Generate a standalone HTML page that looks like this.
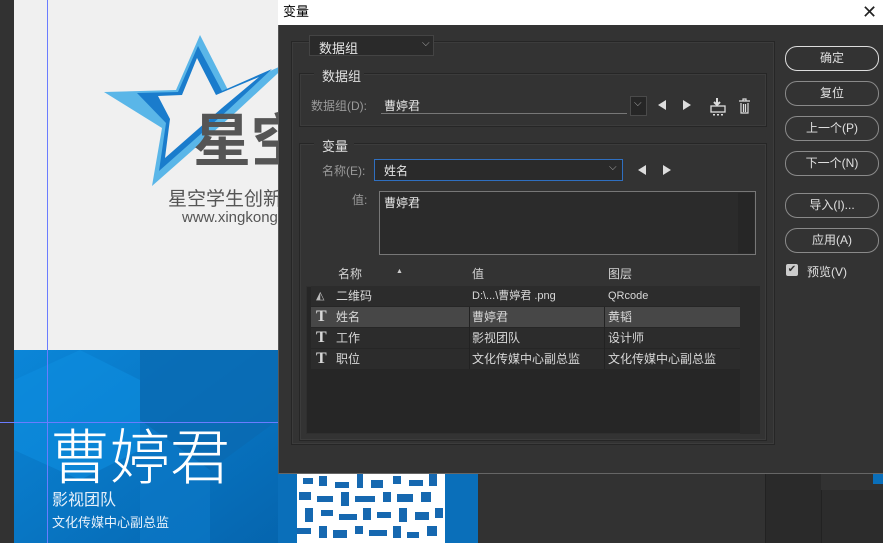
<!DOCTYPE html>
<html><head><meta charset="utf-8"><style>
*{margin:0;padding:0;box-sizing:border-box}
body{width:883px;height:543px;overflow:hidden;background:#323232;position:relative;font-family:"Liberation Sans","Noto Sans CJK SC",sans-serif;}
.a{position:absolute}
.t{color:#d4d4d4;font-size:12px;white-space:nowrap}
.btn{position:absolute;left:785px;width:94px;height:25px;border:1px solid #8a8a8a;border-radius:12px;color:#e0e0e0;font-size:12px;text-align:center;line-height:23px}
.box{position:absolute;border:1px solid #262626;box-shadow:inset 0 0 0 1px #3c3c3c}
.row{position:absolute;left:311px;width:429px;height:20px;font-size:12px;color:#d8d8d8;line-height:20px}
.row span{position:absolute}
</style></head><body>
<div class="a" style="left:14px;top:0;width:264px;height:350px;background:#f0f0f0"></div>
<svg class="a" style="left:0;top:0" width="278" height="543">
<polygon points="200,35 228,90 290,62 236,112 152,186 162,128 104,92 176,90" fill="#5ab6e8"/>
<polygon points="198,46 222,91 272,69 228,110 159,171 166,123 137,93 178,92" fill="#1a7ccc"/>
<polygon points="197,58 216,95 259,77 222,108 165,158 170,119 158,96 182,95" fill="#f0f0f0"/>
<defs><linearGradient id="g" x1="0" y1="0" x2="1" y2="1"><stop offset="0" stop-color="#0b86d8"/><stop offset="1" stop-color="#0565ae"/></linearGradient></defs>
<rect x="14" y="350" width="264" height="193" fill="url(#g)"/>
<polygon points="140,350 278,350 278,420 210,470 140,420" fill="#0a6ab2" opacity=".8"/>
<polygon points="14,380 80,350 140,380 140,450 80,480 14,450" fill="#0d8ee0" opacity=".6"/>
<polygon points="140,420 210,470 210,543 140,543" fill="#0b78c6" opacity=".7"/>
<line x1="47.5" y1="0" x2="47.5" y2="543" stroke="#6a7cff" stroke-width="1"/>
<line x1="0" y1="422.5" x2="278" y2="422.5" stroke="#6a7cff" stroke-width="1"/>
</svg>
<div class="a" style="left:193px;top:104px;font-size:58px;font-weight:bold;color:#555;line-height:64px;font-family:'Noto Sans CJK SC',sans-serif">星空</div>
<div class="a" style="left:168px;top:186px;font-size:19px;color:#555;line-height:24px;white-space:nowrap;font-family:'Noto Sans CJK SC',sans-serif">星空学生创新</div>
<div class="a" style="left:182px;top:209px;font-size:15px;color:#555;line-height:18px;white-space:nowrap">www.xingkong</div>
<div class="a" style="left:50px;top:418px;font-size:60px;color:#fff;line-height:72px;font-weight:300;white-space:nowrap;font-family:'Noto Sans CJK SC',sans-serif">曹婷君</div>
<div class="a" style="left:52px;top:488px;font-size:16px;color:#e6f0fa;line-height:20px;font-family:'Noto Sans CJK SC',sans-serif">影视团队</div>
<div class="a" style="left:52px;top:513px;font-size:13px;color:#e6f0fa;line-height:18px;font-family:'Noto Sans CJK SC',sans-serif">文化传媒中心副总监</div>
<div class="a" style="left:278px;top:474px;width:200px;height:69px;background:#0a6fba"></div>
<svg class="a" style="left:297px;top:474px" width="148" height="69">
<rect width="148" height="69" fill="#fff"/>
<g fill="#1668b0">
<rect x="6" y="4" width="10" height="6"/><rect x="22" y="2" width="8" height="10"/><rect x="38" y="8" width="14" height="6"/><rect x="60" y="0" width="6" height="14"/><rect x="74" y="6" width="12" height="8"/><rect x="96" y="2" width="8" height="8"/><rect x="112" y="6" width="14" height="6"/><rect x="132" y="0" width="8" height="12"/>
<rect x="2" y="18" width="12" height="8"/><rect x="20" y="22" width="16" height="6"/><rect x="44" y="18" width="8" height="14"/><rect x="58" y="22" width="20" height="6"/><rect x="86" y="18" width="8" height="10"/><rect x="100" y="20" width="16" height="8"/><rect x="124" y="18" width="10" height="10"/>
<rect x="8" y="34" width="8" height="14"/><rect x="24" y="36" width="12" height="6"/><rect x="42" y="40" width="18" height="6"/><rect x="66" y="34" width="8" height="12"/><rect x="80" y="38" width="14" height="6"/><rect x="102" y="34" width="8" height="14"/><rect x="118" y="38" width="14" height="8"/><rect x="138" y="34" width="8" height="10"/>
<rect x="0" y="54" width="14" height="6"/><rect x="22" y="52" width="8" height="12"/><rect x="36" y="56" width="14" height="8"/><rect x="58" y="52" width="8" height="8"/><rect x="72" y="56" width="18" height="6"/><rect x="96" y="52" width="8" height="12"/><rect x="110" y="58" width="12" height="6"/><rect x="130" y="52" width="10" height="10"/>
</g></svg>
<div class="a" style="left:765px;top:474px;width:56px;height:69px;background:#2a2a2a;border-left:1px solid #222"></div>
<div class="a" style="left:821px;top:490px;width:62px;height:53px;background:#2c2c2c;border-left:1px solid #222"></div>
<div class="a" style="left:873px;top:474px;width:10px;height:10px;background:#0a6fba"></div>
<div class="a" style="left:278px;top:0;width:605px;height:25px;background:#fff"></div>
<div class="a" style="left:283px;top:4px;font-size:13px;color:#000;line-height:16px">变量</div>
<div class="a" style="left:862px;top:0;font-size:18px;color:#222;line-height:24px">✕</div>
<div class="a" style="left:278px;top:25px;width:605px;height:449px;background:#333;border-left:1px solid #555;border-bottom:1px solid #666"></div>
<div class="box" style="left:291px;top:41px;width:484px;height:404px"></div>
<div class="a" style="left:309px;top:35px;width:125px;height:21px;background:#2a2a2a;border:1px solid #444;"></div>
<div class="a t" style="left:319px;top:38px;font-size:13px;color:#e6e6e6">数据组</div>
<div class="a t" style="left:422px;top:38px;font-size:10px;color:#aaa">⌵</div>
<div class="box" style="left:299px;top:73px;width:468px;height:54px"></div>
<div class="a" style="left:314px;top:66px;width:50px;height:16px;background:#333"></div>
<div class="a t" style="left:322px;top:66px;font-size:13px;color:#e0e0e0">数据组</div>
<div class="a t" style="left:311px;top:97px;color:#9a9a9a">数据组(D):</div>
<div class="a t" style="left:384px;top:97px;color:#e6e6e6">曹婷君</div>
<div class="a" style="left:381px;top:113px;width:246px;height:1px;background:#777"></div>
<div class="a" style="left:630px;top:96px;width:17px;height:20px;background:#262626;border:1px solid #4a4a4a"></div>
<div class="a t" style="left:634px;top:98px;font-size:10px;color:#aaa">⌵</div>
<svg class="a" style="left:655px;top:97px" width="100" height="22">
<polygon points="3,8 11,3 11,13" fill="#ddd"/><polygon points="28,3 36,8 28,13" fill="#ddd"/>
<path d="M62 1v6M59 5l3 3 3-3" stroke="#ddd" stroke-width="2" fill="none"/><rect x="56" y="9" width="14" height="6" fill="none" stroke="#ddd" stroke-width="1.3"/><rect x="58" y="17" width="2" height="1.5" fill="#ddd"/><rect x="62" y="17" width="2" height="1.5" fill="#ddd"/><rect x="66" y="17" width="2" height="1.5" fill="#ddd"/>
<path d="M84 4h11M88 4v-2h3v2M86 6v10h7v-10M88.5 7v8M90.5 7v8" stroke="#ddd" stroke-width="1.2" fill="none"/>
</svg>
<div class="box" style="left:299px;top:143px;width:468px;height:298px"></div>
<div class="a" style="left:314px;top:136px;width:40px;height:16px;background:#333"></div>
<div class="a t" style="left:322px;top:136px;font-size:13px;color:#e0e0e0">变量</div>
<div class="a t" style="left:322px;top:162px;color:#9a9a9a">名称(E):</div>
<div class="a" style="left:374px;top:159px;width:249px;height:22px;background:#2a2a2a;border:1px solid #2f6fc0"></div>
<div class="a t" style="left:384px;top:162px;color:#e6e6e6">姓名</div>
<div class="a t" style="left:609px;top:162px;font-size:10px;color:#aaa">⌵</div>
<svg class="a" style="left:635px;top:163px" width="45" height="14"><polygon points="3,7 11,2 11,12" fill="#ddd"/><polygon points="28,2 36,7 28,12" fill="#ddd"/></svg>
<div class="a t" style="left:352px;top:191px;color:#9a9a9a">值:</div>
<div class="a" style="left:379px;top:191px;width:377px;height:64px;background:#2b2b2b;border:1px solid #777"></div>
<div class="a" style="left:738px;top:193px;width:16px;height:60px;background:#262626"></div>
<div class="a t" style="left:384px;top:194px;color:#e6e6e6">曹婷君</div>
<div class="a t" style="left:338px;top:265px;color:#d4d4d4">名称</div>
<div class="a t" style="left:396px;top:268px;font-size:7px;color:#ccc">▲</div>
<div class="a t" style="left:472px;top:265px;color:#d4d4d4">值</div>
<div class="a t" style="left:608px;top:265px;color:#d4d4d4">图层</div>
<div class="a" style="left:306px;top:286px;width:454px;height:148px;background:#262626;border:1px solid #2f2f2f"></div>
<div class="a" style="left:740px;top:286px;width:20px;height:148px;background:#2a2a2a"></div>
<div class="row" style="top:286px;background:#2c2c2c"><span style="left:5px;font-size:11px;color:#bbb">◭</span><span style="left:25px">二维码</span><span style="left:161px;font-size:11px">D:\...\曹婷君 .png</span><span style="left:297px;font-size:11px">QRcode</span></div>
<div class="row" style="top:307px;background:#474747"><span style="left:5px;font-family:'Liberation Serif';font-weight:bold;font-size:16px">T</span><span style="left:25px">姓名</span><span style="left:161px">曹婷君</span><span style="left:297px">黄韬</span></div>
<div class="row" style="top:328px;background:#2c2c2c"><span style="left:5px;font-family:'Liberation Serif';font-weight:bold;font-size:16px">T</span><span style="left:25px">工作</span><span style="left:161px">影视团队</span><span style="left:297px">设计师</span></div>
<div class="row" style="top:349px;background:#2c2c2c"><span style="left:5px;font-family:'Liberation Serif';font-weight:bold;font-size:16px">T</span><span style="left:25px">职位</span><span style="left:161px">文化传媒中心副总监</span><span style="left:297px">文化传媒中心副总监</span></div>
<div class="a" style="left:469px;top:307px;width:1px;height:62px;background:#222"></div>
<div class="a" style="left:604px;top:307px;width:1px;height:62px;background:#222"></div>
<div class="btn" style="top:46px;border-color:#ddd">确定</div>
<div class="btn" style="top:81px">复位</div>
<div class="btn" style="top:116px">上一个(P)</div>
<div class="btn" style="top:151px">下一个(N)</div>
<div class="btn" style="top:193px">导入(I)...</div>
<div class="btn" style="top:228px">应用(A)</div>
<div class="a" style="left:786px;top:264px;width:12px;height:12px;background:#ccc;border-radius:2px;color:#333;font-size:10px;line-height:12px;text-align:center">✔</div>
<div class="a t" style="left:807px;top:263px;color:#e0e0e0">预览(V)</div>
</body></html>
